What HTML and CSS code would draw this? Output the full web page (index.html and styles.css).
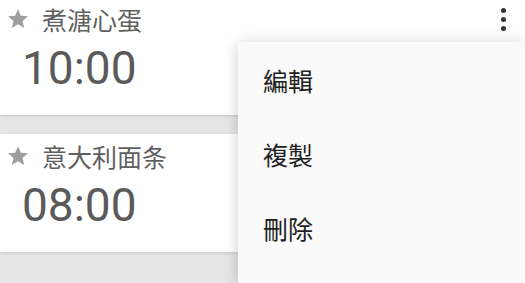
FILE: index.html
```html
<!DOCTYPE html>
<html lang="zh">
<head>
  <meta charset="UTF-8">
  <meta name="viewport" content="width=device-width, initial-scale=1.0">
  <title>Timers</title>
  <link rel="stylesheet" href="styles.css">
</head>
<body>
  <!-- timer list -->
  <div class="list">
    <div class="card card-first">
      <div class="card-head">
        <svg class="star" viewBox="0 0 24 24"><path d="M12 17.27L18.18 21l-1.64-7.03L22 9.24l-7.19-.61L12 2 9.19 8.63 2 9.24l5.46 4.73L5.82 21z"/></svg>
        <span class="card-title">煮溏心蛋</span>
        <button class="more-btn"><span></span><span></span><span></span></button>
      </div>
      <div class="card-time">10:00</div>
    </div>
    <div class="card">
      <div class="card-head">
        <svg class="star" viewBox="0 0 24 24"><path d="M12 17.27L18.18 21l-1.64-7.03L22 9.24l-7.19-.61L12 2 9.19 8.63 2 9.24l5.46 4.73L5.82 21z"/></svg>
        <span class="card-title">意大利面条</span>
      </div>
      <div class="card-time">08:00</div>
    </div>
  </div>

  <!-- popup menu -->
  <ul class="popup-menu">
    <li>編輯</li>
    <li>複製</li>
    <li>刪除</li>
  </ul>
</body>
</html>
```

FILE: styles.css
```css
body {
  margin: 0;
  background-color: #e6e6e6;
  font-family: Roboto, "Noto Sans CJK SC", sans-serif;
  overflow: hidden;
  height: 283px;
  position: relative;
}

.list {
  display: flex;
  flex-direction: column;
  gap: 19px;
}

.card {
  background-color: #fff;
  height: 118px;
  box-shadow: 0 1px 3px rgba(0, 0, 0, 0.15);
}

.card-first {
  margin-top: -3px;
}

.card-head {
  display: flex;
  align-items: center;
  height: 24px;
  padding: 10px 19px 0 6px;
}

.star {
  width: 24px;
  height: 24px;
  fill: #9e9e9e;
  margin-right: 12px;
}

.card-title {
  font-family: "Noto Sans CJK SC", sans-serif;
  font-size: 25px;
  line-height: 24px;
  color: #5f5f5f;
}

.more-btn {
  margin-left: auto;
  border: none;
  background: none;
  padding: 0;
  display: flex;
  flex-direction: column;
  gap: 4px;
}

.more-btn span {
  width: 5px;
  height: 5px;
  border-radius: 50%;
  background-color: #333;
}

.card-time {
  margin-top: 14px;
  padding-left: 22px;
  font-size: 46px;
  line-height: 46px;
  color: #5a5a5a;
}

.popup-menu {
  position: absolute;
  left: 238px;
  top: 42px;
  right: 0;
  bottom: 0;
  margin: 0;
  padding: 1px 0 0;
  list-style: none;
  background-color: #fafafa;
  box-shadow: 0 2px 14px rgba(0, 0, 0, 0.2);
}

.popup-menu li {
  height: 74px;
  display: flex;
  align-items: center;
  padding-left: 25px;
  font-family: "Noto Sans CJK TC", sans-serif;
  font-size: 25px;
  color: #212121;
}
```
